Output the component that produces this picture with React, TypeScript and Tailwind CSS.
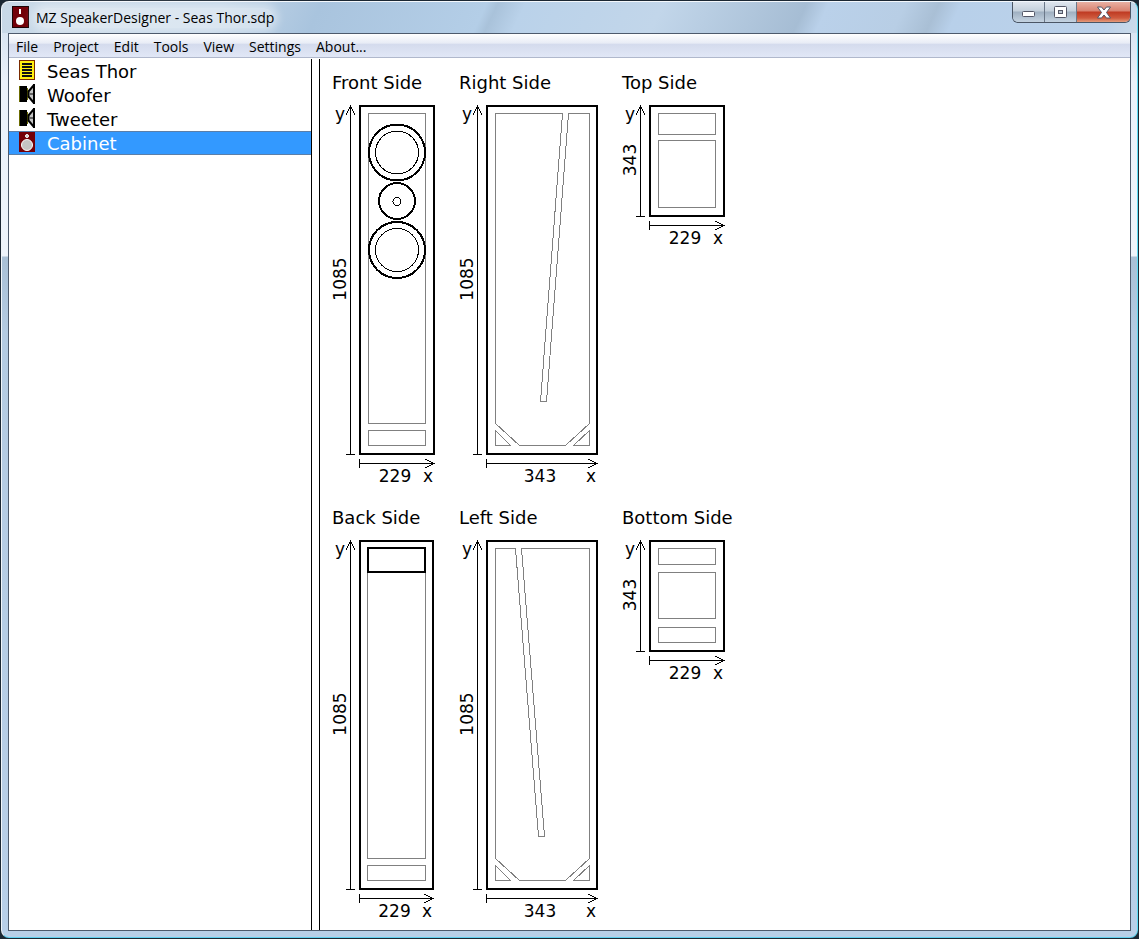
import { useState } from 'react';
import type { ReactNode } from 'react';

const MENU = ['File', 'Project', 'Edit', 'Tools', 'View', 'Settings', 'About...'];

function AppIcon() {
  return (
    <svg width="17" height="22" viewBox="0 0 17 22" aria-hidden="true">
      <rect x="0.5" y="0.5" width="16" height="21" fill="#730008" stroke="#1c0406" />
      <rect x="7" y="3" width="2" height="5" fill="#fff" />
      <circle cx="8" cy="15" r="4" fill="#fff" />
    </svg>
  );
}

function NotesIcon() {
  return (
    <svg width="16" height="20" viewBox="0 0 16 20" shapeRendering="crispEdges" aria-hidden="true">
      <rect x="0.5" y="0.5" width="15" height="19" fill="#ffef10" stroke="#7a2a00" />
      <path d="M3 4h10M3 7h10M3 10h10M3 13h10M3 16h10" stroke="#111" strokeWidth="2" />
    </svg>
  );
}

function DriverIcon() {
  return (
    <svg width="16" height="20" viewBox="0 0 16 20" aria-hidden="true">
      <rect x="0" y="2" width="8" height="16" fill="#000" />
      <path d="M0.5 2v16M8.5 4v12" stroke="#6b6b00" />
      <path d="M9.5 7.5L14.5 1.5V18.5L9.5 12.5Z" fill="#c4c4c4" />
      <path d="M15 0V20M9 8L15 1M9 12L15 19M9.5 7V13" stroke="#000" strokeWidth="2" />
      <path d="M11 10h3" stroke="#000" />
    </svg>
  );
}

function CabinetIcon() {
  return (
    <svg width="16" height="20" viewBox="0 0 16 20" aria-hidden="true">
      <rect width="16" height="20" fill="#730008" />
      <circle cx="8" cy="4" r="1.5" fill="#c4c4c4" stroke="#fff" />
      <circle cx="8" cy="13" r="5.5" fill="#c4c4c4" stroke="#fff" />
    </svg>
  );
}

const ITEMS = [
  { name: 'Seas Thor', icon: <NotesIcon /> },
  { name: 'Woofer', icon: <DriverIcon /> },
  { name: 'Tweeter', icon: <DriverIcon /> },
  { name: 'Cabinet', icon: <CabinetIcon /> },
];

type SideViewProps = {
  title: string;
  w: number;
  h: number;
  xSize: number;
  ySize: number;
  children: ReactNode;
};

// One projection of the cabinet: outline, inner panels and both dimension axes.
function SideView({ title, w, h, xSize, ySize, children }: SideViewProps) {
  return (
    <section>
      <h2 className="mb-[5px] text-[18px] leading-6 whitespace-nowrap">{title}</h2>
      <svg width={w + 27} height={h + 41} role="img" aria-label={title} fill="none" className="overflow-visible">
        <g transform="translate(27 5)" shapeRendering="crispEdges">
          <g stroke="#808080">{children}</g>
          <rect x="1" y="1" width={w - 2} height={h - 2} stroke="#000" strokeWidth="2" />
          <path d={`M-8.5 1V${h}M-13 ${h - 0.5}H-4M-13 10L-8.5 1L-4 10`} stroke="#000" />
          <path d={`M0.5 ${h + 4}V${h + 13}M0 ${h + 8.5}H${w}M${w - 10} ${h + 4}L${w - 1} ${h + 8.5}L${w - 10} ${h + 13}`} stroke="#000" />
        </g>
        <g transform="translate(27 5)" fill="#000" className="text-[17px]">
          <text x="-24" y="15">y</text>
          <text transform={`translate(-13 ${h / 2 - 1}) rotate(-90)`} textAnchor="middle">{ySize}</text>
          <text x={w / 2 - 2} y={h + 27} textAnchor="middle">{xSize}</text>
          <text x={w - 2} y={h + 27} textAnchor="end">x</text>
        </g>
      </svg>
    </section>
  );
}

function Braces() {
  return <path d="M9.5 325.5V340.5H24.5ZM103.5 325.5V340.5H87.5Z" />;
}

function Drawings() {
  return (
    <div className="grid grid-cols-[max-content_max-content_max-content] items-start gap-x-6 gap-y-[15px]">
      <SideView title="Front Side" w={76} h={350} xSize={229} ySize={1085}>
        <rect x="9.5" y="8.5" width="57" height="310" />
        <rect x="9.5" y="325.5" width="57" height="15" />
        <g stroke="#000">
          <circle cx="38" cy="47.5" r="28" strokeWidth="2" />
          <circle cx="38" cy="47.5" r="21.5" />
          <circle cx="38" cy="96" r="18" strokeWidth="2" />
          <circle cx="38" cy="96.5" r="4" />
          <circle cx="38" cy="145" r="28" strokeWidth="2" />
          <circle cx="38" cy="145" r="21.5" />
        </g>
      </SideView>
      <SideView title="Right Side" w={112} h={350} xSize={343} ySize={1085}>
        <path d="M9.5 8.5H76.5L54.5 296.5H60.5L82.5 8.5H103.5V318.5L79.5 340.5H33.5L9.5 318.5Z" />
        <Braces />
      </SideView>
      <SideView title="Top Side" w={76} h={112} xSize={229} ySize={343}>
        <rect x="9.5" y="8.5" width="57" height="21" />
        <rect x="9.5" y="35.5" width="57" height="67" />
      </SideView>
      <SideView title="Back Side" w={75} h={350} xSize={229} ySize={1085}>
        <rect x="8.5" y="8.5" width="58" height="310" />
        <rect x="8.5" y="325.5" width="58" height="15" />
        <rect x="9" y="8" width="57" height="24" stroke="#000" strokeWidth="2" />
      </SideView>
      <SideView title="Left Side" w={112} h={350} xSize={343} ySize={1085}>
        <path d="M9.5 8.5H29.5L52.5 296.5H58.5L35.5 8.5H103.5V318.5L79.5 340.5H33.5L9.5 318.5Z" />
        <Braces />
      </SideView>
      <SideView title="Bottom Side" w={76} h={112} xSize={229} ySize={343}>
        <rect x="9.5" y="8.5" width="57" height="16" />
        <rect x="9.5" y="32.5" width="57" height="46" />
        <rect x="9.5" y="87.5" width="57" height="15" />
      </SideView>
    </div>
  );
}

function WindowButtons() {
  return (
    <div className="flex h-[21px] overflow-hidden rounded-b-md border border-t-0 border-[#4b5665]">
      <button aria-label="Minimize" className="flex w-8 items-center justify-center border-r border-[#6b7889] bg-[linear-gradient(#dfe6ee,#c3cfdb_45%,#9fb0c1_50%,#c4d3e1)]">
        <svg width="14" height="12" viewBox="0 0 14 12"><rect x="0.5" y="5.5" width="12" height="5" rx="1" fill="#fff" stroke="#535666" /></svg>
      </button>
      <button aria-label="Maximize" className="flex w-8 items-center justify-center border-r border-[#6b7889] bg-[linear-gradient(#dfe6ee,#c3cfdb_45%,#9fb0c1_50%,#c4d3e1)]">
        <svg width="13" height="13" viewBox="0 0 13 13">
          <rect x="0.5" y="0.5" width="12" height="11" rx="1" fill="#fff" stroke="#535666" />
          <rect x="4.5" y="4.5" width="4" height="3" fill="#b8c4d0" stroke="#535666" />
        </svg>
      </button>
      <button aria-label="Close" className="flex w-[53px] items-center justify-center bg-[linear-gradient(#e9b0a2,#d98270_45%,#bf3a22_50%,#cf5a3e_80%,#e59c7c)]">
        <svg width="14" height="13" viewBox="0 0 14 13">
          <path d="M0.5 1H4.5L7 4L9.5 1H13.5L9.5 6.5L13.5 12H9.5L7 9L4.5 12H0.5L4.5 6.5Z" fill="#fff" stroke="#535666" strokeLinejoin="round" />
        </svg>
      </button>
    </div>
  );
}

export default function App() {
  const [selected, setSelected] = useState('Cabinet');

  return (
    <div className="flex min-h-screen flex-col bg-[#1b2733] p-px font-['DejaVu_Sans',Verdana,sans-serif] text-black">
      <div className="flex grow flex-col rounded-lg border border-t-[#f4f8fc] border-r-[#5fdcf5] border-b-[#5fd0f0] border-l-[#f0f5fa] bg-[linear-gradient(#cfdeed,#eaf1fa_80px,#eef4fb_254px,#a9c0d6_255px,#b4cbe2_330px,#b8cfe8)] px-1.5 pb-1.5">
        <header className="-mx-1.5 flex h-[31px] items-start justify-between rounded-t-lg bg-[linear-gradient(115deg,#c9d9e7_0px,#c3d6e8_200px,#a9c4de_290px,#b4cee7_440px,#a9c2da_450px,#bad2ea_475px,#c2d6ea_600px,#a6bdd4_730px,#bad1ea_750px,#b8cee5_820px,#a9bfd5_850px,#b8d0ea_870px,#bcd2ea_1010px,#cbdbea_1040px,#d3e1ee)] pr-1.5 pl-2.5">
          <div className="flex items-start gap-[7px] pt-1">
            <AppIcon />
            <h1 className="mt-0.5 rounded-full bg-white/40 font-['Open_Sans','Segoe_UI',sans-serif] text-[14px] leading-5 whitespace-nowrap shadow-[0_0_8px_4px_rgba(255,255,255,0.4)]">MZ SpeakerDesigner - Seas Thor.sdp</h1>
          </div>
          <WindowButtons />
        </header>

        <div className="flex grow flex-col border border-[#4d5a6c] bg-white">
          <nav className="flex h-6 shrink-0 items-end gap-[15px] border-b border-[#b0b8cc] bg-[linear-gradient(#ffffff,#e8ecf6_40%,#d4dbed_44%,#e1e7f6)] px-[7px] font-['Open_Sans','Segoe_UI',sans-serif] text-[14px]">
            {MENU.map(item => (
              <button key={item} className="leading-5">{item}</button>
            ))}
          </nav>

          <main className="flex grow">
            <aside className="w-[302px] shrink-0 pt-px">
              {ITEMS.map(item => (
                <button
                  key={item.name}
                  onClick={() => setSelected(item.name)}
                  className={`flex h-6 w-full items-start gap-3 border-y pl-2.5 text-left text-[18px] leading-6 ${selected === item.name ? 'border-[#5c7fa8] bg-[#3399ff] text-white' : 'border-transparent'}`}
                >
                  {item.icon}
                  {item.name}
                </button>
              ))}
            </aside>
            <div className="mt-px w-[9px] shrink-0 border-x border-black" />
            <div className="grow pt-[13px] pl-3">
              <Drawings />
            </div>
          </main>
        </div>
      </div>
    </div>
  );
}
